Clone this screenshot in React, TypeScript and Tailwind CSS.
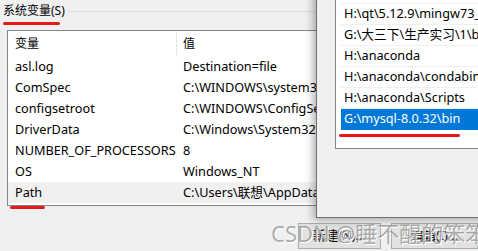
const font = { fontFamily: '"Noto Sans", "Noto Sans CJK SC", sans-serif' };

const rows = [
  { name: "asl.log", value: "Destination=file" },
  { name: "ComSpec", value: "C:\\WINDOWS\\system32\\cmd.exe" },
  { name: "configsetroot", value: "C:\\WINDOWS\\ConfigSetRoot" },
  { name: "DriverData", value: "C:\\Windows\\System32\\Drivers\\DriverData" },
  { name: "NUMBER_OF_PROCESSORS", value: "8" },
  { name: "OS", value: "Windows_NT" },
  { name: "Path", value: "C:\\Users\\联想\\AppData\\Local\\Programs" },
];

const paths = [
  "H:\\qt\\5.12.9\\mingw73_64\\lib",
  "H:\\qt\\5.12.9\\mingw73_64\\bin",
  "G:\\大三下\\生产实习\\1\\bin",
  "H:\\anaconda",
  "H:\\anaconda\\condabin",
  "H:\\anaconda\\Scripts",
  "G:\\mysql-8.0.32\\bin",
];

export default function App() {
  return (
    <div
      className="relative w-[478px] h-[251px] overflow-hidden bg-[#f0f0f0] text-[12.7px] text-black"
      style={font}
    >
      {/* group title */}
      <div className="flex items-center h-[22px] pl-[3px]">
        <span className="text-[12px] leading-[16px] -mt-[1px]">系统变量(S)</span>
        <div className="flex-1 h-px bg-[#dcdcdc] ml-[3px]" />
      </div>

      {/* variables table */}
      <div className="ml-[7px] mt-[8px] w-[500px] h-[176px] border border-[#828790] bg-white">
        <div className="flex h-[25px] items-center">
          <div className="w-[168px] pl-[7px] text-[12px]">变量</div>
          <div className="w-px h-[23px] bg-[#e5e5e5]" />
          <div className="pl-[6px] text-[12px]">值</div>
        </div>
        {rows.map((r) => (
          <div
            key={r.name}
            className={`flex h-[21px] items-center whitespace-nowrap ${r.name === "Path" ? "bg-[#f0f0f0]" : ""}`}
          >
            <div className="w-[169px] pl-[7px]">{r.name}</div>
            <div className="pl-[6px]">{r.value}</div>
          </div>
        ))}
      </div>

      {/* buttons */}
      <div className="flex mt-[17px] ml-[298px] gap-[10px]">
        <div className="w-[85px] h-[26px] border border-[#adadad] bg-[#e1e1e1] flex items-center justify-center">
          新建(N)...
        </div>
        <div className="w-[90px] h-[26px] border border-[#adadad] bg-[#e1e1e1] flex items-center justify-center">
          编辑(I)...
        </div>
      </div>

      {/* edit path dialog on top */}
      <div className="absolute left-[316px] top-[-21px] w-[280px] h-[239px] bg-[#f0f0f0] border border-[#6f6f6f] shadow-[-3px_2px_8px_rgba(0,0,0,0.3)] pl-[18px] pt-[2px]">
        <div className="w-[240px] h-[167px] border border-[#828790] bg-white pl-[5px] whitespace-nowrap overflow-hidden">
          {paths.map((p, i) => {
            const sel = i === paths.length - 1;
            return (
              <div
                key={p}
                className={`h-[21px] flex items-center pl-[3px] border-b ${sel ? "bg-[#0078d7] text-white border-[#0078d7]" : "border-[#f0f0f0]"}`}
              >
                {p}
              </div>
            );
          })}
        </div>
      </div>

      {/* annotation underlines */}
      <div className="absolute left-[3px] top-[22px] w-[57px] h-[3px] rounded-full bg-[#e5191c]" />
      <div className="absolute left-[10px] top-[206px] w-[35px] h-[3px] rounded-full bg-[#e5191c]" />
      <div className="absolute left-[339px] top-[134px] w-[121px] h-[3px] rounded-full bg-[#e5191c]" />

      {/* watermark */}
      <div className="absolute left-[271px] top-[219px] text-[22px] leading-[28px] text-[#8a8a8a]/70 whitespace-nowrap [text-shadow:1px_1px_0_#ffffff]">
        CSDN @睡不醒的笨笨
      </div>
    </div>
  );
}
